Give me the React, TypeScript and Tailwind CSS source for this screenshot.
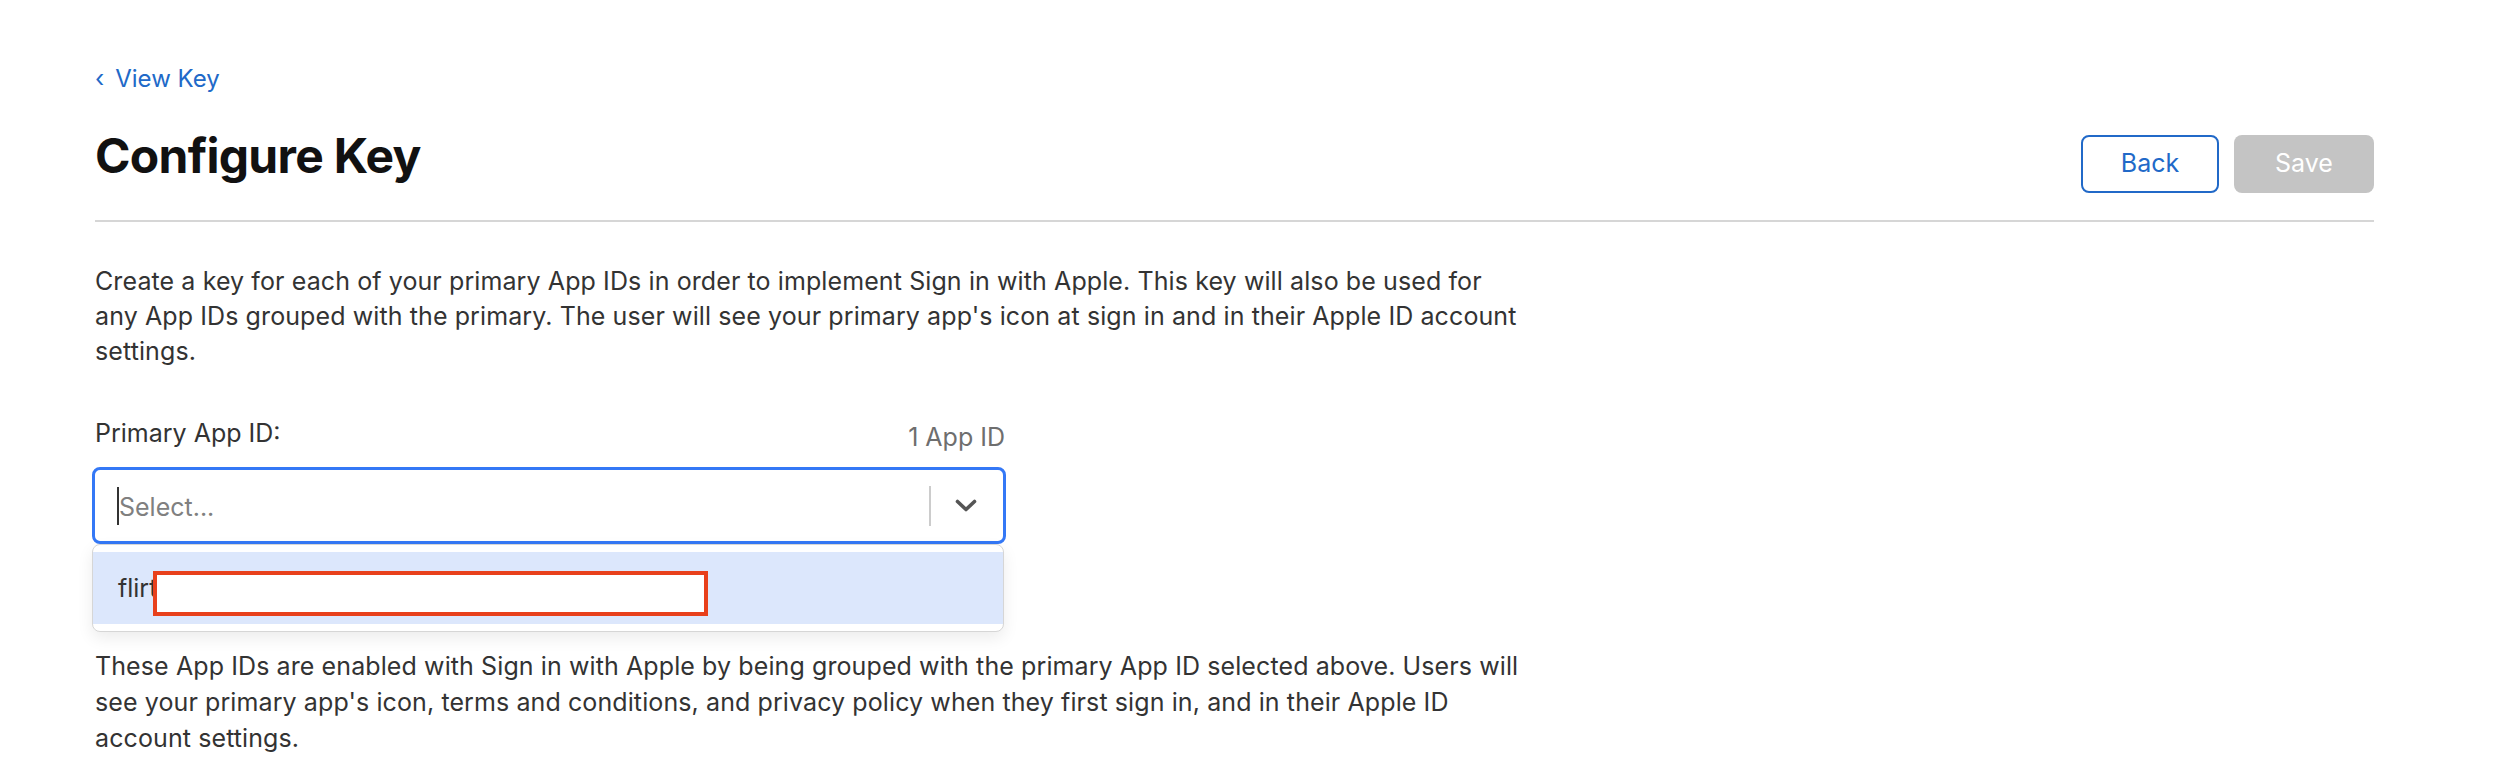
import React from 'react'

const FONT = "font-['Inter','Liberation_Sans',sans-serif]"

function Chevron() {
  return (
    <svg width="22" height="13" viewBox="0 0 22 13" fill="none">
      <path d="M2.5 2.5 L11 10.5 L19.5 2.5" stroke="#555" strokeWidth="3.6" strokeLinecap="round" strokeLinejoin="round" />
    </svg>
  )
}

export default function App() {
  return (
    <div className={`min-h-[782px] bg-white ${FONT} text-[#333]`}>
      <div className="ml-[95px] w-[2279px] pt-[63px]">
        {/* back link */}
        <a className="flex items-center text-[24px] leading-[32px] text-[#2169c8]">
          <span className="mr-[11px]">‹</span>
          View Key
        </a>

        {/* header */}
        <div className="mt-[33px] flex items-start justify-between">
          <h1 className="text-[48px] font-bold leading-[56px] tracking-[-0.015em] text-[#111]">Configure Key</h1>
          <div className="mt-[7px] flex gap-[15px]">
            <button className="h-[58px] w-[138px] rounded-[8px] border-2 border-[#2169c8] text-[25px] text-[#2169c8]">
              Back
            </button>
            <button className="h-[58px] w-[140px] rounded-[8px] bg-[#c4c4c4] text-[25px] text-white">Save</button>
          </div>
        </div>
        <div className="mt-[27px] h-[2px] bg-[#d6d6d6]" />

        {/* intro */}
        <p className="mt-[42px] whitespace-nowrap text-[25px] leading-[35px] tracking-[0.004em]">
          Create a key for each of your primary App IDs in order to implement Sign in with Apple. This key will also be used for
          <br />
          any App IDs grouped with the primary. The user will see your primary app's icon at sign in and in their Apple ID account
          <br />
          settings.
        </p>

        {/* primary app id */}
        <div className="mt-[47px] flex w-[910px] items-start justify-between text-[25px] leading-[35px]">
          <span>Primary App ID:</span>
          <span className="pt-[4px] text-[#6e6e6e]">1 App ID</span>
        </div>

        <div className="relative ml-[-3px] mt-[12px] w-[914px]">
          <div className="flex h-[77px] items-center rounded-[8px] border-[3px] border-[#3478f6] bg-white pl-[22px] pr-[26px]">
            <span className="h-[38px] w-[2px] bg-[#333]" />
            <span className="flex-1 pt-[4px] text-[25px] text-[#808080]">Select...</span>
            <span className="h-[40px] w-[2px] bg-[#cccccc]" />
            <span className="ml-[24px] flex items-center">
              <Chevron />
            </span>
          </div>

          {/* dropdown menu */}
          <div className="absolute left-0 top-[77px] w-[912px] rounded-[8px] border border-[#d6d6d6] bg-white py-[7px] shadow-[0_6px_16px_rgba(0,0,0,0.08)]">
            <div className="relative flex h-[72px] items-center bg-[#dce7fc] pl-[25px] pt-[2px] text-[25px]">
              flirt
              <span className="absolute left-[60px] top-[19px] h-[45px] w-[555px] border-[4px] border-[#e8401c] bg-white" />
            </div>
          </div>
        </div>

        {/* grouped ids */}
        <p className="mt-[104px] whitespace-nowrap text-[25px] leading-[36px] tracking-[0.004em]">
          These App IDs are enabled with Sign in with Apple by being grouped with the primary App ID selected above. Users will
          <br />
          see your primary app's icon, terms and conditions, and privacy policy when they first sign in, and in their Apple ID
          <br />
          account settings.
        </p>
      </div>
    </div>
  )
}
